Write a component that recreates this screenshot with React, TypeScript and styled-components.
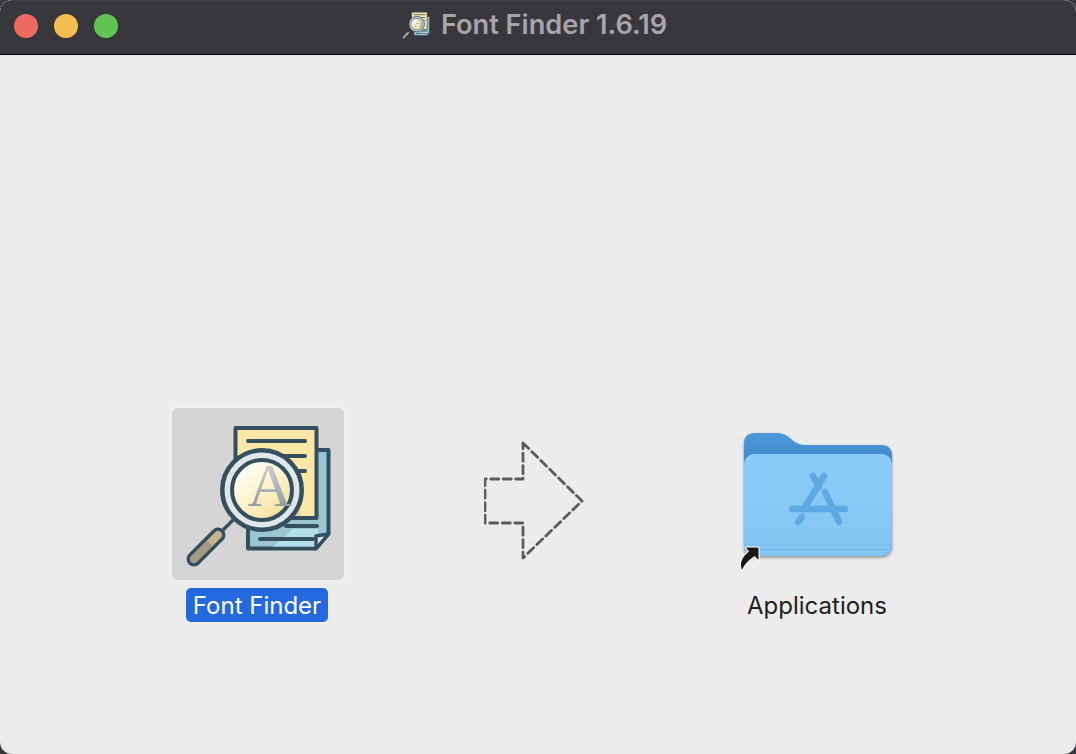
import React from "react";
import styled, { createGlobalStyle } from "styled-components";

const Global = createGlobalStyle`
  html, body { margin: 0; padding: 0; background: #39383d; }
  body { width: 1076px; height: 754px; overflow: hidden; font-family: Inter, "Liberation Sans", sans-serif; }
`;

const Window = styled.div`
  width: 1076px;
  height: 754px;
  display: flex;
  flex-direction: column;
  border-radius: 12px;
  overflow: hidden;
  background: #ececec;
`;

const TitleBar = styled.header`
  position: relative;
  flex: 0 0 55px;
  box-sizing: border-box;
  display: flex;
  align-items: center;
  justify-content: center;
  background: #38373c;
  border-bottom: 1px solid #000;
  border-radius: 12px 12px 0 0;
  box-shadow: inset 0 1px 1px -1px rgba(255, 255, 255, 0.45);
`;

const Lights = styled.div`
  position: absolute;
  left: 14px;
  top: 14px;
  display: flex;
  gap: 16px;
`;

const Light = styled.span<{ $color: string }>`
  width: 24px;
  height: 24px;
  border-radius: 50%;
  background: ${(p) => p.$color};
`;

const TitleGroup = styled.div`
  display: flex;
  align-items: center;
  gap: 10px;
  margin-right: 8px;
  margin-top: -5px;
`;

const TitleText = styled.h1`
  margin: 0;
  font-size: 27.2px;
  font-weight: 600;
  line-height: 32px;
  color: #a6a5aa;
`;

const Stage = styled.main`
  flex: 1;
  box-sizing: border-box;
  padding: 353px 0 0 172px;
  display: flex;
  align-items: flex-start;
`;

const Item = styled.div`
  width: 172px;
  display: flex;
  flex-direction: column;
  align-items: center;
`;

const IconTile = styled.div<{ $selected?: boolean }>`
  width: 172px;
  height: 172px;
  border-radius: 6px;
  background: ${(p) => (p.$selected ? "#d5d5d5" : "transparent")};
  box-shadow: ${(p) => (p.$selected ? "0 0 0 3px rgba(255,255,255,0.14)" : "none")};
  display: flex;
  align-items: center;
  justify-content: center;
`;

const Label = styled.span<{ $selected?: boolean }>`
  margin-top: 8px;
  margin-right: ${(p) => (p.$selected ? "2px" : "0")};
  height: 34px;
  padding: 0 7px;
  border-radius: 5px;
  font-size: 24px;
  line-height: 36px;
  color: ${(p) => (p.$selected ? "#fff" : "#1f1f1f")};
  background: ${(p) => (p.$selected ? "#2368dc" : "transparent")};
  white-space: nowrap;
`;

const ArrowSlot = styled.div`
  margin: 33px 147px 0 140px;
  width: 100px;
  height: 119px;
`;

function AppIcon({ size }: { size: number }) {
  const ink = "#34505f";
  return (
    <svg width={size} height={size} viewBox="0 0 155 155" fill="none">
      <defs>
        <linearGradient id={`lens${size}`} x1="0.15" y1="0.05" x2="0.8" y2="0.9">
          <stop offset="0" stopColor="#ffffff" />
          <stop offset="0.5" stopColor="#fdf3cf" />
          <stop offset="1" stopColor="#f8e29f" />
        </linearGradient>
        <linearGradient id={`glyph${size}`} x1="0" y1="0" x2="0" y2="1">
          <stop offset="0" stopColor="#dfe2dd" />
          <stop offset="1" stopColor="#7f8e98" />
        </linearGradient>
      </defs>
      <path d="M100 33H147.500V117L135 131.500H67V100H100Z" fill="#9cc5d3" stroke={ink} strokeWidth="4" strokeLinejoin="round" />
      <path d="M92 129.500L112 112H137V116L134 129.500Z" fill="#b4dfec" />
      <path d="M135 131.500V119L147.500 117Z" fill="#dcebef" stroke={ink} strokeWidth="3.400" strokeLinejoin="round" />
      <rect x="54.500" y="11" width="81" height="90" fill="#fce7a6" stroke={ink} strokeWidth="4" strokeLinejoin="round" />
      <path d="M119 72V99H92Z" fill="#e2d298" />
      <path d="M67 24H124M90 39H124M110 54H124M105 109H136M79 122H132" stroke={ink} strokeWidth="4" strokeLinecap="round" />
      <path d="M52 103L42 113" stroke={ink} strokeWidth="3.400" />
      <path d="M37 118L13 142" stroke={ink} strokeWidth="15" strokeLinecap="round" />
      <path d="M37 118L13 142" stroke="#c8b38f" strokeWidth="8" strokeLinecap="round" />
      <path d="M26 129L13 142" stroke="#a39a85" strokeWidth="8" strokeLinecap="round" />
      <circle cx="81" cy="73" r="39.700" fill="#dfe7ea" stroke={ink} strokeWidth="4.500" />
      <circle cx="81" cy="73" r="30" fill={`url(#lens${size})`} stroke={ink} strokeWidth="4" />
      <text x="89" y="89" textAnchor="middle" fontFamily="'Liberation Serif', serif" fontSize="62" fill={`url(#glyph${size})`}>A</text>
    </svg>
  );
}

function DashedArrow() {
  return (
    <svg width="100" height="119" viewBox="0 0 100 119" fill="none">
      <path
        d="M39 2 L98 60 L39 117 V82 H1 V38 H39 Z"
        stroke="#5c5c5c"
        strokeWidth="2.800"
        strokeDasharray="8 4.500"
        strokeLinecap="round"
        strokeLinejoin="round"
      />
    </svg>
  );
}

function FolderIcon() {
  return (
    <svg width="172" height="172" viewBox="0 0 172 172" fill="none">
      <defs>
        <linearGradient id="folderBack" x1="0" y1="0" x2="0" y2="1">
          <stop offset="0" stopColor="#4f9ad9" />
          <stop offset="0.2" stopColor="#3f89cc" />
        </linearGradient>
        <linearGradient id="folderFront" x1="0" y1="0" x2="0" y2="1">
          <stop offset="0" stopColor="#8bcbf7" />
          <stop offset="1" stopColor="#84c5f3" />
        </linearGradient>
        <filter id="folderShadow" x="-10%" y="-10%" width="120%" height="125%">
          <feDropShadow dx="0" dy="1.500" stdDeviation="1.500" floodColor="#000" floodOpacity="0.4" />
        </filter>
      </defs>
      <g filter="url(#folderShadow)">
        <path d="M13 36 Q13 25 24 25 H47 Q54 25 60 31 Q66 37 75 37 H150 Q161 37 161 48 V136 Q161 148 150 148 H24 Q13 148 13 136Z" fill="url(#folderBack)" />
        <path d="M13 58 Q13 46 25 46 H149 Q161 46 161 58 V136 Q161 148 149 148 H25 Q13 148 13 136Z" fill="url(#folderFront)" />
        <path d="M13 137 H161 M13 141.500 H161" stroke="#74b7e8" strokeWidth="1.200" />
      </g>
      <g stroke="#5da9e3" strokeWidth="6.500" strokeLinecap="round">
        <path d="M93 68 L73 101" />
        <path d="M82 68 L88 79" />
        <path d="M94 84 L108 114" />
        <path d="M61 101 H114" />
        <path d="M71 109 L67 114" />
      </g>
      <path
        d="M15 139.500 H27.500 V152 L23.500 148 L21 150 Q14 155 11 162 Q7 152 18 143.500 Z"
        fill="#181818"
        stroke="#fff"
        strokeWidth="2"
        strokeLinejoin="round"
        paintOrder="stroke"
      />
    </svg>
  );
}

export default function App() {
  return (
    <>
      <Global />
      <Window>
        <TitleBar>
          <Lights>
            <Light $color="#ee6a5f" />
            <Light $color="#f5bd4f" />
            <Light $color="#61c454" />
          </Lights>
          <TitleGroup>
            <AppIcon size={30} />
            <TitleText>Font Finder 1.6.19</TitleText>
          </TitleGroup>
        </TitleBar>
        <Stage>
          <Item>
            <IconTile $selected>
              <AppIcon size={155} />
            </IconTile>
            <Label $selected>Font Finder</Label>
          </Item>
          <ArrowSlot>
            <DashedArrow />
          </ArrowSlot>
          <Item>
            <IconTile>
              <FolderIcon />
            </IconTile>
            <Label>Applications</Label>
          </Item>
        </Stage>
      </Window>
    </>
  );
}
